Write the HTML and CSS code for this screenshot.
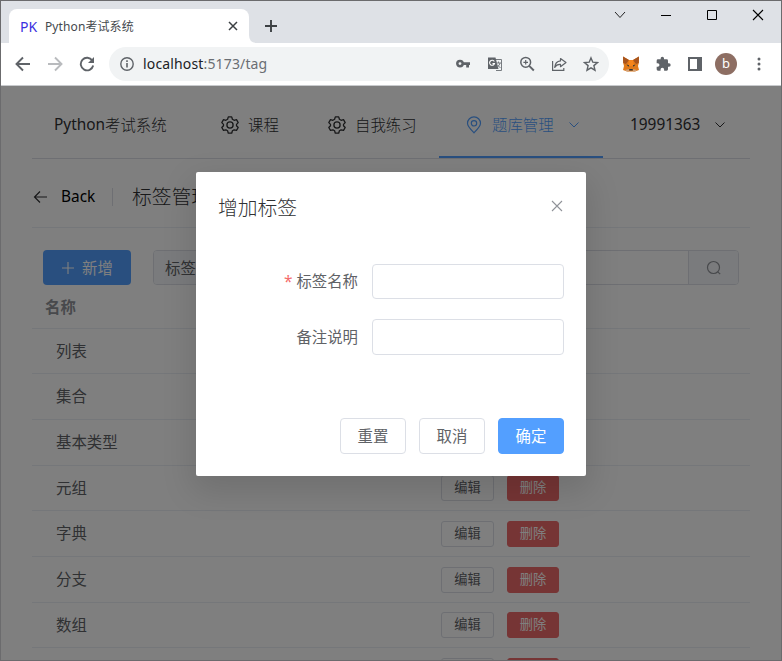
FILE: index.html
```html
<!DOCTYPE html>
<html lang="zh-CN">
<head>
<meta charset="utf-8">
<title>Python考试系统</title>
<link rel="stylesheet" href="styles.css">
</head>
<body>
<div class="window">
  <header class="tabstrip">
    <div class="tab">
      <span class="favicon">PK</span>
      <span class="tab-title">Python考试系统</span>
      <svg class="tab-close" width="10" height="10" viewBox="0 0 10 10"><path d="M1 1l8 8M9 1L1 9" stroke="#3c4043" stroke-width="1.5"/></svg>
    </div>
    <svg class="tab-curve" width="8" height="8" viewBox="0 0 8 8"><path d="M0 0Q0 8 8 8H0z" fill="#fff"/></svg>
    <svg class="new-tab" width="12" height="12" viewBox="0 0 12 12"><path d="M6 0v12M0 6h12" stroke="#3c4043" stroke-width="1.9"/></svg>
    <div class="controls">
      <svg width="12" height="12" viewBox="0 0 12 12"><path d="M1 3l5 5.500l5-5.500" fill="none" stroke="#222" stroke-width="1"/></svg>
      <svg width="12" height="12" viewBox="0 0 12 12"><path d="M1 6.500h10" stroke="#000"/></svg>
      <svg width="12" height="12" viewBox="0 0 12 12"><path d="M1.500 1.500h9v9h-9z" fill="none" stroke="#000"/></svg>
      <svg width="12" height="12" viewBox="0 0 12 12"><path d="M1 1l10 10M11 1L1 11" stroke="#000" stroke-width="1.100"/></svg>
    </div>
  </header>
  <div class="toolbar">
    <div class="history">
      <svg width="16" height="16" viewBox="0 0 16 16" fill="none" stroke="#5f6368" stroke-width="1.900"><path d="M15 8H2M8 1.500L1.500 8L8 14.500"/></svg>
      <svg width="16" height="16" viewBox="0 0 16 16" fill="none" stroke="#b9bbbe" stroke-width="1.900"><path d="M1 8h13M8 1.500L14.500 8L8 14.500"/></svg>
      <svg width="16" height="16" viewBox="0 0 16 16"><path d="M13.300 4.500A6.300 6.300 0 1 0 14.200 9.500" fill="none" stroke="#5f6368" stroke-width="1.900"/><path d="M15 1v6H9z" fill="#5f6368"/></svg>
    </div>
    <div class="omnibox">
      <svg width="14" height="14" viewBox="0 0 14 14"><circle cx="7" cy="7" r="6.200" fill="none" stroke="#5f6368" stroke-width="1.400"/><path d="M7 6v4.500M7 3.300v1.600" stroke="#5f6368" stroke-width="1.600"/></svg>
      <span class="url"><b>localhost</b>:5173/tag</span>
      <div class="omni-icons">
        <svg width="16" height="16" viewBox="0 0 16 16"><circle cx="5" cy="7.600" r="2.700" fill="none" stroke="#5f6368" stroke-width="2.500"/><path d="M8 6.200h7v2.800h-1v2.500h-2.800V9H8z" fill="#5f6368"/></svg>
        <svg width="16" height="16" viewBox="0 0 16 16"><path d="M7 3.500h7.500v11H9" fill="#f1f3f4" stroke="#777b80"/><path d="M1 1.500h7.500l3 11.500H1z" fill="#5f6368"/><path d="M7.300 5.600A2.500 2.500 0 1 0 7.500 7.500H5.500" fill="none" stroke="#fff" stroke-width="1.100"/><path d="M9 7h5M11.500 5.500V7M13 7q-.5 3-3 4M10.500 9l3 3" fill="none" stroke="#777b80"/></svg>
        <svg width="16" height="16" viewBox="0 0 16 16"><circle cx="6.700" cy="6.300" r="4.900" fill="none" stroke="#5f6368" stroke-width="1.500"/><path d="M10.200 9.800l4.600 4.700" stroke="#5f6368" stroke-width="1.900"/><path d="M6.700 4v4.600M4.400 6.300H9" stroke="#5f6368" stroke-width="1.200"/></svg>
        <svg width="16" height="16" viewBox="0 0 16 16" fill="none" stroke="#5f6368" stroke-width="1.200"><path d="M1.600 5v9.400h11.200V12"/><path d="M9.500 2.500L15 6.500L9.500 10.700V8.300Q5.500 8 3.700 11.400Q4.200 5.500 9.500 4.900z" stroke-linejoin="round"/></svg>
        <svg width="16" height="16" viewBox="0 0 16 16"><path d="M8 1.900l1.800 4.300l4.600.4l-3.500 3l1.100 4.600L8 11.800l-4 2.400l1.100-4.600l-3.500-3l4.600-.4z" fill="none" stroke="#5f6368" stroke-width="1.400"/></svg>
      </div>
    </div>
    <div class="extensions">
      <svg width="18" height="18" viewBox="0 0 18 18"><path d="M1 1.500L7 5h4l6-3.500l-.2 6.500L16 11l1 4l-4 1.500H5L1 15l1-4L1.200 8z" fill="#e07a1a"/><path d="M1 1.500L7 5l-3 4l-2.800-1zM17 1.500L11 5l3 4l2.800-1z" fill="#a8541d"/><path d="M7 5h4l1 6H6z" fill="#f6851b"/><path d="M4.500 9.600l2.600.6l-.6 1.500zM13.500 9.600l-2.600.6l.6 1.500zM7.300 14h3.400v1.600H7.300z" fill="#28343c"/><path d="M3 15l3.800-1l.2 2.500H5zM15 15l-3.800-1l-.2 2.500h2z" fill="#cfa27e"/></svg>
      <svg width="16" height="16" viewBox="0 0 24 24"><path d="M21 11h-1.500V7a2 2 0 0 0-2-2H13.500V3.500a2.500 2.500 0 0 0-5 0V5h-4a2 2 0 0 0-2 2v3.800H4a2.700 2.700 0 0 1 0 5.400H2.500V20a2 2 0 0 0 2 2h3.800v-1.500a2.700 2.700 0 0 1 5.400 0V22h3.800a2 2 0 0 0 2-2v-4H21a2.500 2.500 0 0 0 0-5z" fill="#5f6368"/></svg>
      <svg width="14" height="14" viewBox="0 0 14 14"><path d="M1 1h12v12H1z" fill="none" stroke="#5f6368" stroke-width="2"/><path d="M9 0h5v14H9z" fill="#5f6368"/></svg>
      <span class="avatar">b</span>
      <svg width="4" height="14" viewBox="0 0 4 14" fill="#5f6368"><circle cx="2" cy="2" r="1.500"/><circle cx="2" cy="7" r="1.500"/><circle cx="2" cy="12" r="1.500"/></svg>
    </div>
  </div>

  <main class="viewport">
    <div class="content">
      <nav class="menu">
        <div class="menu-item"><span class="latin">Python</span>考试系统</div>
        <div class="menu-item">
          <svg class="icon" width="20" height="20" viewBox="0 0 20 20"><use href="#gear"/></svg>课程
        </div>
        <div class="menu-item">
          <svg class="icon" width="20" height="20" viewBox="0 0 20 20"><use href="#gear"/></svg>自我练习
        </div>
        <div class="menu-item active">
          <svg class="icon" width="20" height="20" viewBox="0 0 20 20" fill="none" stroke="currentColor" stroke-width="1.200"><path d="M10 17.800C6 13.900 3.500 11.500 3.500 8.300a6.500 6.500 0 0 1 13 0c0 3.200-2.500 5.600-6.500 9.500z"/><circle cx="10" cy="8.300" r="2.700"/></svg>题库管理
          <svg class="arrow" width="12" height="12" viewBox="0 0 12 12"><path d="M1.500 3.500L6 8l4.500-4.500"/></svg>
        </div>
        <div class="menu-item user"><span class="latin">19991363</span>
          <svg class="arrow" width="12" height="12" viewBox="0 0 12 12"><path d="M1.500 3.500L6 8l4.500-4.500"/></svg>
        </div>
      </nav>
      <div class="page-header">
        <svg width="15" height="14" viewBox="0 0 15 14"><path d="M1.500 7H14M7 1.500L1.500 7L7 12.500" fill="none" stroke="#303133" stroke-width="1.200"/></svg>
        <span class="back">Back</span>
        <span class="page-title">标签管理</span>
      </div>
      <div class="actions">
        <div class="btn add"><svg width="14" height="14" viewBox="0 0 14 14"><path d="M7 1v12M1 7h12" stroke="#fff" stroke-width="1.100"/></svg>新增</div>
        <div class="search">
          <span class="prepend">标签名称</span>
          <span class="field"></span>
          <span class="append"><svg width="16" height="16" viewBox="0 0 16 16" fill="none" stroke="#909399" stroke-width="1.200"><circle cx="7.500" cy="7.500" r="6"/><path d="M11.800 11.800l2.400 2.400"/></svg></span>
        </div>
      </div>
      <div class="table">
        <div class="thead">名称</div>
        <div class="row"><span>列表</span></div>
        <div class="row"><span>集合</span></div>
        <div class="row"><span>基本类型</span></div>
        <div class="row"><span>元组</span><div class="edit">编辑</div><div class="del">删除</div></div>
        <div class="row"><span>字典</span><div class="edit">编辑</div><div class="del">删除</div></div>
        <div class="row"><span>分支</span><div class="edit">编辑</div><div class="del">删除</div></div>
        <div class="row"><span>数组</span><div class="edit">编辑</div><div class="del">删除</div></div>
        <div class="row"><span></span><div class="edit"></div><div class="del"></div></div>
      </div>
    </div>
    <div class="overlay">
      <section class="dialog">
        <div class="dialog-head">
          <h2>增加标签</h2>
          <svg width="12" height="12" viewBox="0 0 12 12"><path d="M1 1l10 10M11 1L1 11" stroke="#909399" stroke-width="1.100"/></svg>
        </div>
        <div class="form">
          <div class="form-item"><span class="label required">标签名称</span><input class="input"></div>
          <div class="form-item"><span class="label">备注说明</span><input class="input"></div>
        </div>
        <div class="dialog-foot">
          <div class="btn">重置</div><div class="btn">取消</div><div class="btn primary">确定</div>
        </div>
      </section>
    </div>
  </main>
</div>
<svg class="defs" width="0" height="0">
  <symbol id="gear" viewBox="0 0 20 20">
    <g fill="none" stroke="currentColor" stroke-width="1.300" stroke-linejoin="round">
      <path d="M8.300 1.900h3.400l.7 2.400l1.700 1l2.400-.6l1.700 2.900L16.500 9.400v1.300l1.700 1.800l-1.700 2.900l-2.400-.6l-1.700 1l-.7 2.400H8.300l-.7-2.400l-1.700-1l-2.400.6l-1.700-2.900l1.700-1.800V9.400L1.800 7.600l1.700-2.900l2.400.6l1.700-1z"/>
      <circle cx="10" cy="10" r="3.100"/>
    </g>
  </symbol>
</svg>
</body>
</html>
```
FILE: styles.css
```css
* { box-sizing: border-box; }
body {
  margin: 0;
  overflow: hidden;
  font-family: "Noto Sans", "Noto Sans CJK SC", sans-serif;
  font-size: 15.4px;
  font-weight: 300;
  color: #303133;
}
svg { display: block; flex: none; }
.defs { position: absolute; }
.window {
  width: 782px;
  height: 661px;
  border: 1px solid #6b6b6d;
  display: flex;
  flex-direction: column;
  overflow: hidden;
}

.tabstrip { height: 42px; background: #dee1e6; display: flex; align-items: flex-end; flex: none; }
.tab {
  width: 240px;
  height: 34px;
  margin-left: 8px;
  padding: 0 11px;
  background: #fff;
  border-radius: 8px 8px 0 0;
  display: flex;
  align-items: center;
}
.favicon { width: 25px; font-size: 14px; font-weight: 400; color: #3a2fe0; }
.tab-title { flex: 1; font-size: 12px; font-weight: 400; letter-spacing: .1px; color: #45494d; }
.new-tab { margin: 0 0 11px 8px; }
.controls { margin: 0 17px 22px auto; display: flex; gap: 34px; }

.toolbar {
  height: 43px;
  background: #fff;
  border-bottom: 1px solid #c8cacd;
  display: flex;
  align-items: center;
  flex: none;
}
.history { display: flex; gap: 16px; margin-left: 14px; }
.omnibox {
  margin-left: 14px;
  width: 500px;
  height: 34px;
  padding: 0 10px 0 11px;
  border-radius: 17px;
  background: #f1f3f4;
  display: flex;
  align-items: center;
}
.url { margin: -2px 0 0 9px; font-size: 14px; font-weight: 400; letter-spacing: .15px; color: #6a6e73; }
.url b { font-weight: 400; color: #202124; }
.omni-icons { display: flex; gap: 16px; margin-left: auto; }
.extensions { display: flex; align-items: center; margin-left: 13px; }
.extensions > :nth-child(2) { margin-left: 15px; }
.extensions > :nth-child(3) { margin-left: 17px; }
.avatar {
  width: 22px;
  height: 22px;
  margin: 0 20px 0 13px;
  border-radius: 50%;
  background: #8d6e63;
  color: #fff;
  font-size: 13px;
  font-weight: 400;
  line-height: 21px;
  text-align: center;
}

.viewport { position: relative; flex: 1; overflow: hidden; background: #fff; }
.content { width: 718px; margin-left: 31px; }
.menu {
  height: 73px;
  padding-top: 5px;
  border-bottom: 1px solid #dcdfe6;
  display: grid;
  grid-template-columns: 167px 107px 133px 164px 1fr;
}
.menu-item { display: flex; align-items: center; padding: 0 0 0 22px; white-space: nowrap; }
.latin { font-weight: 400; }
.menu-item .icon { margin: 0 8px 0 -1px; }
.menu-item.active {
  padding: 2px 0 0 26px;
  color: #539fff;
  border-bottom: 2px solid #539fff;
}
.menu-item.user { padding-left: 27px; }
.arrow { margin-left: 14px; fill: none; stroke: currentColor; stroke-width: 1; }
.page-header { height: 69px; padding-top: 7px; border-bottom: 1px solid #ebeef5; display: flex; align-items: center; }
.page-header svg { margin-left: 1px; }
.back { margin-left: 13px; width: 52px; font-weight: 400; color: #000; border-right: 1px solid #dcdfe6; line-height: 18px; }
.page-title { margin: -2px 0 0 19px; font-size: 19.8px; }

.btn {
  width: 66px;
  height: 36px;
  padding-bottom: 2px;
  border: 1px solid #dcdfe6;
  border-radius: 4px;
  display: flex;
  align-items: center;
  justify-content: center;
  color: #606266;
  font-weight: 400;
}
.actions { display: flex; padding: 22px 11px 0; gap: 22px; }
.btn.add { width: 88px; height: 35px; padding: 0; gap: 7px; background: #539fff; border: 0; color: #fff; }
.search { flex: 1; height: 35px; border: 1px solid #dcdfe6; border-radius: 4px; display: flex; overflow: hidden; }
.prepend, .append { background: #f5f7fa; display: flex; align-items: center; }
.prepend { padding: 0 11px; color: #606266; border-right: 1px solid #dcdfe6; font-weight: 400; }
.field { flex: 1; }
.append { width: 50px; justify-content: center; border-left: 1px solid #dcdfe6; }

.thead { height: 44px; padding: 11px 13px; line-height: 23px; font-weight: 700; color: #909399; border-bottom: 1px solid #ebeef5; }
.row {
  height: 46px;
  padding-left: 24px;
  border-bottom: 1px solid #ebeef5;
  display: flex;
  align-items: center;
  color: #606266;
  font-weight: 400;
}
.row:nth-child(3n + 2) { height: 45px; }
.row span { width: 385px; padding-bottom: 2px; }
.edit, .del { width: 53px; height: 26px; line-height: 22px; border: 1px solid #dcdfe6; border-radius: 3px; text-align: center; font-size: 13.2px; }
.del { width: 52px; margin-left: 13px; background: #ed6b6b; border-color: #ed6b6b; color: #fff; }

.overlay { position: absolute; inset: 0; background: rgba(0, 0, 0, .5); }
.dialog {
  width: 390px;
  height: 304px;
  margin: 86px 0 0 195px;
  padding: 20px 22px 22px;
  background: #fff;
  border-radius: 2px;
  box-shadow: 0 12px 32px 4px rgba(0, 0, 0, .12);
}
.dialog-head { display: flex; justify-content: space-between; height: 28px; align-items: center; }
.dialog-head svg { margin-right: 1px; }
.dialog-head h2 { margin: 0; font-size: 19.8px; font-weight: 300; }
.form { margin-top: 44px; display: flex; flex-direction: column; gap: 20px; }
.form-item { display: flex; height: 35px; align-items: center; }
.form-item + .form-item { height: 36px; }
.label { width: 140px; margin-right: 14px; padding-bottom: 2px; text-align: right; color: #606266; font-weight: 400; }
.required::before { content: "*"; color: #f56c6c; margin-right: 4px; }
.input { width: 192px; height: 100%; border: 1px solid #dcdfe6; border-radius: 4px; outline: 0; padding: 0 12px; }
.dialog-foot { display: flex; justify-content: flex-end; gap: 13px; margin-top: 63px; }
.btn.primary { background: #539fff; border-color: #539fff; color: #fff; }
```
